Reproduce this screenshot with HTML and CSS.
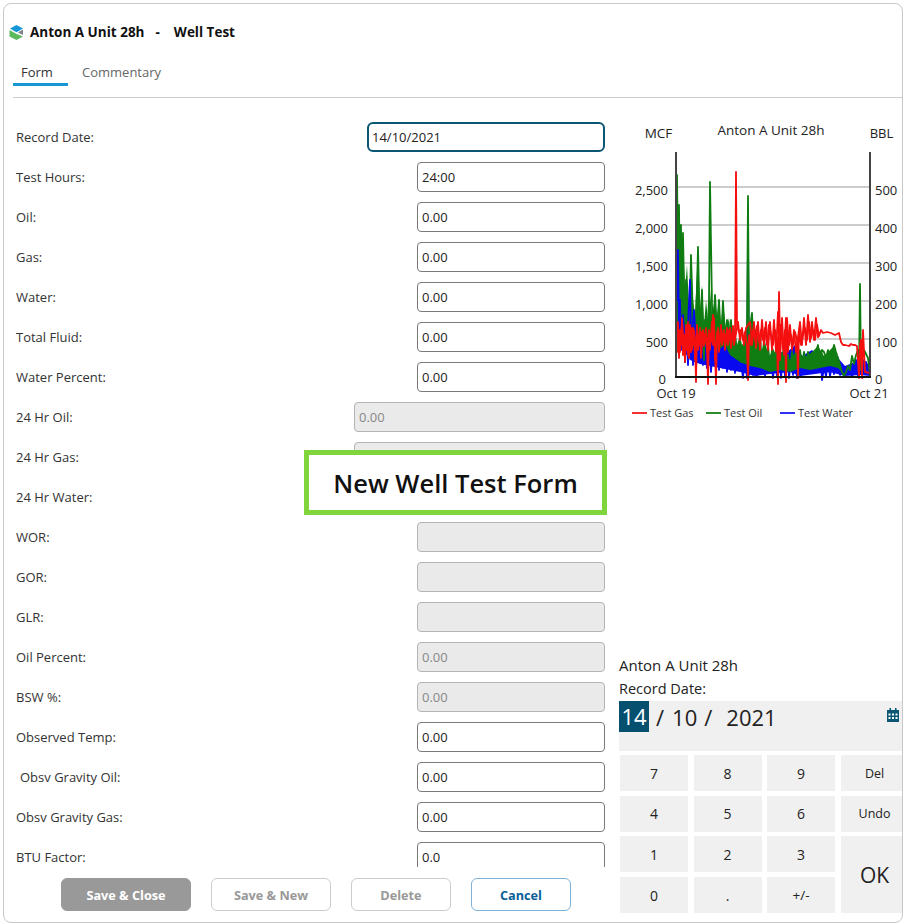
FILE: index.html
```html
<!DOCTYPE html>
<html lang="en">
<head>
<meta charset="utf-8">
<title>Well Test</title>
<link rel="stylesheet" href="styles.css">
</head>
<body>
<div class="window">
  <header class="title-bar">
    <svg class="logo" viewBox="0 0 15 15" width="15" height="15">
      <polygon fill="#1597d5" points="7.5,0 14,3.6 7.5,7.2 1,3.6"/>
      <polygon fill="#5cb85c" points="0.5,5 7.5,9 14,11.5 7.5,15 0.5,11.5"/>
      <polygon fill="#7b8288" points="14,4.6 14,10 9,7.4"/>
    </svg>
    <span>Anton A Unit 28h</span><span class="title-sep">-</span><span>Well Test</span>
  </header>
  <nav class="tabs">
    <a class="tab tab-active">Form</a>
    <a class="tab">Commentary</a>
  </nav>
  <main class="content">
    <section class="left">
      <form class="form">
        <div class="row"><label>Record Date:</label><input class="field field-focus" value="14/10/2021" readonly></div>
        <div class="row"><label>Test Hours:</label><input class="field" value="24:00" readonly></div>
        <div class="row"><label>Oil:</label><input class="field" value="0.00" readonly></div>
        <div class="row"><label>Gas:</label><input class="field" value="0.00" readonly></div>
        <div class="row"><label>Water:</label><input class="field" value="0.00" readonly></div>
        <div class="row"><label>Total Fluid:</label><input class="field" value="0.00" readonly></div>
        <div class="row"><label>Water Percent:</label><input class="field" value="0.00" readonly></div>
        <div class="row"><label>24 Hr Oil:</label><input class="field field-off field-wide" value="0.00" disabled></div>
        <div class="row"><label>24 Hr Gas:</label><input class="field field-off field-wide" value="0.00" disabled></div>
        <div class="row"><label>24 Hr Water:</label><input class="field field-off" disabled></div>
        <div class="row"><label>WOR:</label><input class="field field-off" disabled></div>
        <div class="row"><label>GOR:</label><input class="field field-off" disabled></div>
        <div class="row"><label>GLR:</label><input class="field field-off" disabled></div>
        <div class="row"><label>Oil Percent:</label><input class="field field-off" value="0.00" disabled></div>
        <div class="row"><label>BSW %:</label><input class="field field-off" value="0.00" disabled></div>
        <div class="row"><label>Observed Temp:</label><input class="field" value="0.00" readonly></div>
        <div class="row"><label class="indent">Obsv Gravity Oil:</label><input class="field" value="0.00" readonly></div>
        <div class="row"><label>Obsv Gravity Gas:</label><input class="field" value="0.00" readonly></div>
        <div class="row"><label>BTU Factor:</label><input class="field" value="0.0" readonly></div>
      </form>
      <footer class="actions">
        <button class="btn btn-primary" type="button">Save &amp; Close</button>
        <button class="btn btn-new" type="button">Save &amp; New</button>
        <button class="btn btn-delete" type="button">Delete</button>
        <button class="btn btn-cancel" type="button">Cancel</button>
      </footer>
    </section>
    <aside class="right">
      <svg class="chart" viewBox="620 110 282 320" width="282" height="320">
        <g class="grid">
          <line x1="676" x2="870" y1="187" y2="187"/>
          <line x1="676" x2="870" y1="225" y2="225"/>
          <line x1="676" x2="870" y1="263" y2="263"/>
          <line x1="676" x2="870" y1="301" y2="301"/>
          <line x1="676" x2="870" y1="339" y2="339"/>
        </g>
        <polygon class="band-blue" points="676,240 680,300 684,340 690,345 700,345 712,340 725,345 735,350 745,350 760,352 770,356 778,350 785,354 795,345 802,356 812,350 820,358 830,362 838,358 845,366 855,362 862,358 870,366 870,376 860,375 845,376 830,372 815,374 800,376 790,372 770,374 755,376 740,372 720,368 700,364 690,360 680,345 676,340"/>
        <polyline class="s s-blue" points="676,240 677,300 678,265 679,345 680,290 681,350 682,305 683,335 684,310 685,362 686,320 688,365 689,335 690,350 692,325 693,365 695,340 696,368 698,330 700,360 701,345 703,365 705,340 707,368 709,335 711,372 713,345 715,360 717,320 719,370 721,335 723,368 725,345 727,372 729,340 731,370 733,350 735,373 737,355 739,370 741,362 743,378 745,355 747,378 748,243 749,375 751,358 753,375 755,360 757,376 759,356 761,374 763,362 765,376 767,358 769,372 771,356 773,378 775,360 777,376 779,354 781,378 783,358 785,376 787,352 789,378 791,360 793,375 795,349 797,378 799,358 801,376 803,364 805,374 807,360 809,370 811,366 813,372 815,362 817,358 819,366 821,362 822,380 824,368 826,376 828,362 830,376 832,366 834,374 836,370 838,358 840,375 842,366 844,376 846,370 848,374 850,372 852,376 854,372 856,360 858,376 860,368 862,358 864,374 866,362 868,372 870,368"/>
        <polygon class="band-green" points="676,240 677,185 678,240 679,210 680,270 681,225 682,280 683,240 685,290 687,265 689,305 691,262 693,300 695,315 697,270 698,252 700,310 702,285 704,325 706,300 708,320 710,290 712,315 715,298 717,318 719,300 721,325 723,302 726,330 729,318 731,340 734,325 737,345 740,335 743,350 746,332 749,340 752,320 755,350 758,335 761,352 765,342 769,358 773,348 778,360 783,350 790,360 797,350 804,358 812,352 818,346 824,356 830,350 834,346 838,360 842,372 838,368 830,366 820,368 810,370 800,368 790,372 780,370 770,372 760,368 750,366 740,362 730,355 725,345 718,350 712,342 705,345 700,338 695,350 690,340 685,345 680,335 676,320"/>
        <polyline class="s s-green" points="676,240 677,175 678,260 679,205 680,300 681,225 682,330 683,233 685,340 686,280 688,350 690,300 691,255 693,320 695,345 697,290 698,247 700,340 702,290 704,360 705,320 707,345 709,300 710,182 712,305 713,340 715,295 717,330 719,300 721,345 723,301 725,340 727,320 729,350 731,320 733,355 735,335 737,350 739,345 741,362 743,345 745,362 747,330 748,196 749,340 751,320 752,313 754,355 756,330 758,360 760,335 762,364 764,340 766,362 768,345 770,366 772,350 774,368 776,352 778,368 780,355 782,366 784,352 786,368 788,355 790,370 792,352 794,366 796,350 798,368 800,350 802,365 804,352 806,364 808,352 810,368 812,354 814,362 816,352 818,345 820,362 822,350 824,352 826,358 828,350 830,362 832,355 834,345 836,352 838,358 840,365 842,372 844,376 846,372 848,366 850,370 852,356 854,364 856,355 858,350 859,370 860,284 861,370 862,352 864,350 866,354 868,358 870,375"/>
        <polyline class="s s-blue" points="676,240 677,300 678,250 679,335 680,300 681,345 683,315 685,345 688,325 690,280 691,345 694,310 696,345"/>
        <polyline class="s s-red" points="676,330 677,352 678,322 679,358 680,330 681,345 682,318 683,355 684,335 685,362 686,325 687,350 688,322 689,358 690,332 691,352 692,328 693,345 694,330 695,360 697,325 698,350 700,328 701,358 703,330 704,346 706,328 707,352 709,330 710,350 712,322 713,345 714,318 715,360 718,328 719,352 721,325 722,345 724,330 725,350 727,328 728,345 730,328 731,348 733,326 734,345 738,322 740,340 742,328 744,345 746,328 750,322 752,345 754,322 756,348 758,322 760,350 762,320 764,345 766,322 768,350 770,322 772,350 774,320 776,352 778,312 780,360 782,318 784,355 786,318 788,352 790,325 792,350 794,330 796,352 800,322 802,345 804,318 806,345 808,315 810,342 812,322 814,340 816,318 818,338"/>
        <polyline class="s s-red" points="676,330 677,345 678,328 680,352 682,322 684,348 686,330 688,355 690,325 692,350 693,328 695,340 696,382 697,330 699,345 701,332 703,340 705,335 707,345 708,384 709,335 711,342 713,315 715,350 716,384 717,332 719,345 721,330 723,340 725,335 727,342 729,330 731,342 733,332 735,340 736,172 737,325 739,332 741,330 743,340 745,332 747,345 748,380 749,335 751,345 753,330 755,340 757,326 759,342 761,330 763,340 765,328 767,345 769,325 771,335 773,345 775,330 777,340 778,384 779,292 780,342 781,325 783,350 785,330 786,382 787,318 789,345 791,335 793,345 795,332 797,340 798,378 799,330 801,345 803,335 805,328 807,340 809,322 811,338 813,330 815,340 817,325 819,336 821,330 823,333 827,332 831,333 835,335 839,333 841,342 843,345 845,345 849,346 851,344 853,345 855,345 857,346 859,378 860,345 861,340 862,378 863,330 865,372 870,373"/>
        <line class="axis-side" x1="676" x2="676" y1="152" y2="377"/>
        <line class="axis-side" x1="870" x2="870" y1="152" y2="377"/>
        <line class="axis-base" x1="675" x2="871" y1="377" y2="377"/>
        <text class="t t-title t-mid" x="658.500" y="138">MCF</text>
        <text class="t t-title t-mid" x="771" y="135">Anton A Unit 28h</text>
        <text class="t t-mid" x="881.500" y="138">BBL</text>
        <text class="t t-end" x="668" y="195">2,500</text>
        <text class="t t-end" x="668" y="233">2,000</text>
        <text class="t t-end" x="668" y="271">1,500</text>
        <text class="t t-end" x="668" y="309">1,000</text>
        <text class="t t-end" x="668" y="347">500</text>
        <text class="t t-end" x="666" y="384">0</text>
        <text class="t" x="875" y="195">500</text>
        <text class="t" x="875" y="233">400</text>
        <text class="t" x="875" y="271">300</text>
        <text class="t" x="875" y="309">200</text>
        <text class="t" x="875" y="347">100</text>
        <text class="t" x="875" y="384">0</text>
        <text class="t t-mid" x="676" y="398">Oct 19</text>
        <text class="t t-mid" x="869" y="398">Oct 21</text>
        <line class="leg leg-red" x1="632" x2="647" y1="413" y2="413"/>
        <text class="t-leg" x="650" y="417">Test Gas</text>
        <line class="leg leg-green" x1="706" x2="721" y1="413" y2="413"/>
        <text class="t-leg" x="724" y="417">Test Oil</text>
        <line class="leg leg-blue" x1="780" x2="795" y1="413" y2="413"/>
        <text class="t-leg" x="798" y="417">Test Water</text>
      </svg>
      <div class="entry">
        <div class="entry-name">Anton A Unit 28h</div>
        <div class="entry-label">Record Date:</div>
        <div class="display">
          <div class="date-parts">
            <span class="part-sel">14</span><span class="slash">/</span><span>10</span><span class="slash">/</span><span class="year">2021</span>
          </div>
          <svg class="cal" viewBox="0 0 12 14" width="12" height="14">
            <path fill="#0a5673" d="M2.5 0h1.500v2h4V0h1.500v2H12v12H0V2h2.500z"/>
            <g fill="#fff">
              <rect x="1.500" y="5.500" width="2" height="2"/><rect x="5" y="5.500" width="2" height="2"/><rect x="8.500" y="5.500" width="2" height="2"/>
              <rect x="1.500" y="9" width="2" height="2"/><rect x="5" y="9" width="2" height="2"/><rect x="8.500" y="9" width="2" height="2"/>
            </g>
          </svg>
        </div>
        <div class="keypad">
          <button class="key" type="button">7</button>
          <button class="key" type="button">8</button>
          <button class="key" type="button">9</button>
          <button class="key key-small" type="button">Del</button>
          <button class="key" type="button">4</button>
          <button class="key" type="button">5</button>
          <button class="key" type="button">6</button>
          <button class="key key-small" type="button">Undo</button>
          <button class="key" type="button">1</button>
          <button class="key" type="button">2</button>
          <button class="key" type="button">3</button>
          <button class="key key-ok" type="button">OK</button>
          <button class="key" type="button">0</button>
          <button class="key" type="button">.</button>
          <button class="key key-sign" type="button">+/-</button>
        </div>
      </div>
    </aside>
  </main>
  <div class="callout">New Well Test Form</div>
</div>
</body>
</html>
```
FILE: styles.css
```css
* { box-sizing: border-box; }
html, body { margin: 0; padding: 0; background: #fff; }
body { font-family: "Open Sans", "Noto Sans", sans-serif; color: #222; font-size: 13px; }

.window {
  position: relative;
  width: 900px;
  height: 920px;
  margin: 3px 0 0 3px;
  border: 1px solid #c8c8c8;
  border-radius: 8px;
  display: flex;
  flex-direction: column;
  overflow: hidden;
}

.title-bar {
  display: flex;
  align-items: center;
  height: 56px;
  padding: 0 0 0 5px;
  font-weight: 700;
  font-size: 13.5px;
  color: #111;
}
.logo { margin-right: 6px; }
.title-sep { margin: 0 14px 0 11px; }

.tabs {
  display: flex;
  height: 38px;
  margin-left: 9px;
  border-bottom: 1px solid #ccc;
  align-items: flex-start;
}
.tab {
  height: 26px;
  padding: 3px 8px 0;
  font-size: 13px;
  color: #666;
  margin-left: 6px;
}
.tab-active {
  width: 55px;
  margin-left: 0;
  color: #333;
  border-bottom: 3px solid #1597d5;
}

.content { flex: 1; display: flex; min-height: 0; }
.left { width: 608px; display: flex; flex-direction: column; }

.form {
  height: 769px;
  overflow: hidden;
  padding: 24px 7px 0 12px;
  display: flex;
  flex-direction: column;
  gap: 10px;
}
.row {
  flex: none;
  height: 30px;
  display: flex;
  align-items: center;
  justify-content: space-between;
}
.row label { font-size: 13px; color: #333; }
.row label.indent { padding-left: 4px; }

.field {
  width: 188px;
  height: 30px;
  padding: 0 4px;
  border: 1px solid #7a7a7a;
  border-radius: 4px;
  background: #fff;
  font: 13px "Open Sans", "Noto Sans", sans-serif;
  color: #222;
  outline: none;
}
.field-focus {
  width: 238px;
  border: 2px solid #0a5673;
  border-radius: 6px;
  padding: 0 3px;
}
.field-off { background: #eaeaea; border-color: #b4b4b4; color: #888; }
.field-wide { width: 251px; }

.actions {
  display: flex;
  gap: 20px;
  margin-top: 11px;
  padding-left: 57px;
}
.btn {
  height: 33px;
  border-radius: 6px;
  background: #fff;
  font: 700 12.7px "Open Sans", "Noto Sans", sans-serif;
  padding: 1px 0 0;
}
.btn-primary { width: 130px; background: #999; border: 1px solid #999; color: #fff; }
.btn-new { width: 120px; border: 1px solid #ccc; color: #999; }
.btn-delete { width: 100px; border: 1px solid #ccc; color: #999; }
.btn-cancel { width: 100px; border: 1px solid #7fb2d8; color: #0b5e96; }

.right {
  flex: 1;
  display: flex;
  flex-direction: column;
  padding: 12px 0 9px 7px;
  min-width: 0;
}
.chart { display: block; margin-left: 1px; }
.grid line { stroke: #ccc; stroke-width: 2; }
.band-blue { fill: #0a0af0; }
.band-green { fill: #0f7d12; }
.s { fill: none; stroke-width: 1.8; stroke-linejoin: round; }
.s-blue { stroke: #0a0af0; }
.s-green { stroke: #0f7d12; }
.s-red { stroke: #f50f0f; }
.axis-side { stroke: #444; stroke-width: 2; }
.axis-base { stroke: #111; stroke-width: 2; }
.t { font-size: 13px; fill: #222; }
.t-title { font-size: 13.5px; }
.t-mid { text-anchor: middle; }
.t-end { text-anchor: end; }
.t-leg { font-size: 11px; fill: #333; }
.leg { stroke-width: 2; }
.leg-red { stroke: #f53030; }
.leg-green { stroke: #2e8b2e; }
.leg-blue { stroke: #3030f5; }

.entry { margin-top: auto; }
.entry-name { font-size: 15px; line-height: 24px; color: #222; }
.entry-label { font-size: 14.5px; line-height: 24px; color: #222; }
.display {
  height: 50px;
  background: #f0f0f0;
  display: flex;
  justify-content: space-between;
  align-items: flex-start;
}
.date-parts { display: flex; align-items: center; height: 31px; font-size: 22px; color: #222; }
.part-sel {
  width: 30px;
  height: 31px;
  background: #05506f;
  color: #fff;
  text-align: center;
  line-height: 31px;
}
.slash { margin: 0 8px 0 7px; }
.year { margin-left: 6px; }
.cal { margin: 7px 3px 0 0; }

.keypad {
  display: grid;
  grid-template-columns: 68px 68px 68px 68px;
  grid-auto-rows: 36px;
  column-gap: 5.5px;
  row-gap: 4.67px;
  margin: 4px 0 0 1px;
}
.key {
  border: 0;
  padding: 0;
  background: #f0f0f0;
  font: 14px "Open Sans", "Noto Sans", sans-serif;
  color: #222;
}
.key-small { font-size: 12.5px; }
.key-sign { font-size: 13.5px; }
.key-ok { grid-column: 4; grid-row: 3 / span 2; font-size: 21px; }

.callout {
  position: absolute;
  left: 300px;
  top: 446px;
  width: 303px;
  height: 65px;
  border: 5px solid #80d43c;
  background: #fff;
  display: flex;
  align-items: center;
  justify-content: center;
  font-size: 25.5px;
  font-weight: 600;
  color: #111;
}
```
